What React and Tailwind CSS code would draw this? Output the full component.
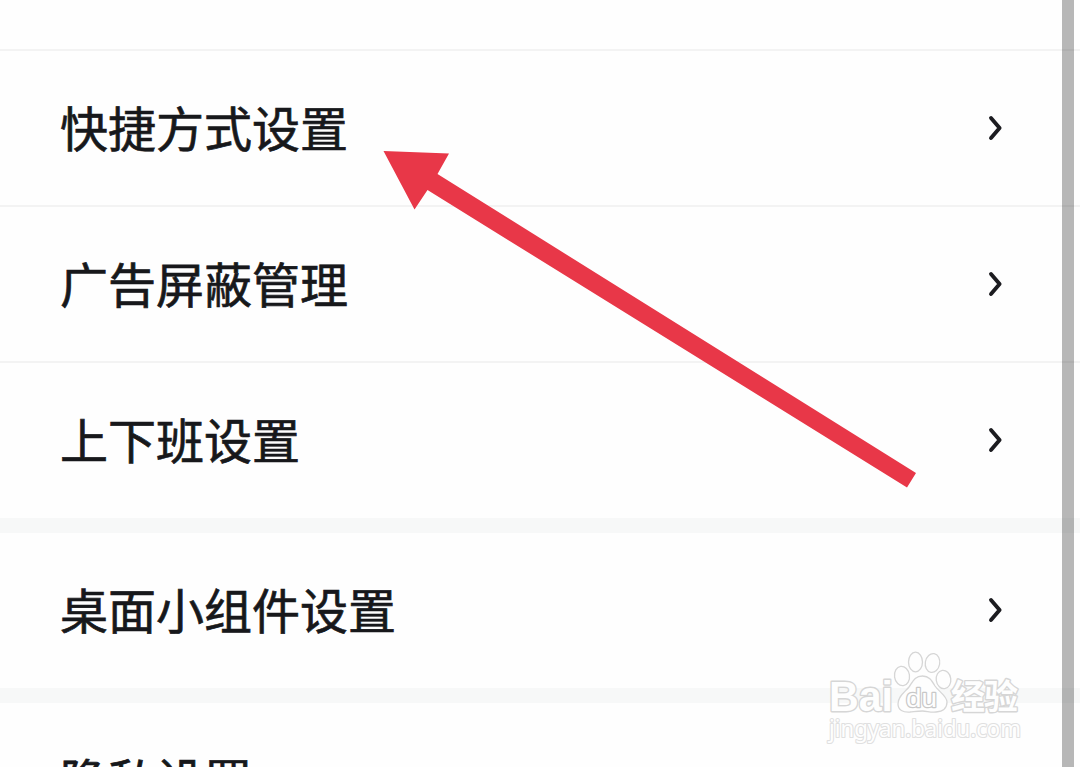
const GROUPS = [
  ['快捷方式设置', '广告屏蔽管理', '上下班设置'],
  ['桌面小组件设置'],
  ['隐私设置'],
]

function Chevron() {
  return (
    <svg width="16" height="28" viewBox="0 0 16 28" fill="none" className="shrink-0">
      <path d="M4 4 L12.600 14 L4 24" stroke="#1c1c20" strokeWidth="3.9" strokeLinecap="round" strokeLinejoin="round" />
    </svg>
  )
}

function SettingRow({ label, last }) {
  return (
    <div className={`flex shrink-0 items-center justify-between pr-[77px] pl-[60px] ${last ? 'h-[155px] pb-[1px]' : 'h-[156px] border-b-2 border-[#f3f3f3]'}`}>
      <span className="pb-[4px] text-[48px] leading-none text-[#17181b] [-webkit-text-stroke:0.7px_#17181b]">{label}</span>
      <Chevron />
    </div>
  )
}

function Watermark() {
  return (
    <svg width="204" height="100" viewBox="0 0 204 100" className="absolute top-[647px] left-[823px]">
      <g fill="#fefefe" stroke="#d6d6d6" strokeWidth="1.3" strokeLinejoin="round">
        <text x="6" y="64" fontSize="42" fontFamily="Liberation Sans, sans-serif" fontWeight="bold" paintOrder="stroke" strokeWidth="2.8" textLength="64" lengthAdjust="spacingAndGlyphs">Bai</text>
        <text x="128" y="62" fontSize="34" fontFamily="Noto Sans CJK SC, sans-serif" fontWeight="bold" paintOrder="stroke" strokeWidth="2.8" textLength="67">经验</text>
        <ellipse cx="79" cy="29" rx="7.5" ry="9.7" transform="rotate(-8 79 29)" />
        <ellipse cx="92.5" cy="15" rx="7" ry="9.8" />
        <ellipse cx="109.5" cy="16" rx="7.2" ry="9.5" transform="rotate(10 109.5 16)" />
        <ellipse cx="120.5" cy="32.5" rx="7.3" ry="9.2" transform="rotate(-8 120.5 32.5)" />
        <path d="M99.500 29 C92 29 90 34 86 40 C82 45 75 49 75 57 C75 63 80 65.500 87 65 C92 64.500 95 64 99.500 64 C104 64 107 65.500 113 65 C120 64.500 124 62 124 55 C124 49 116 45 112 39 C108.500 33 106 29 99.500 29 Z" />
        <text x="83" y="60" fontSize="26" fontFamily="Liberation Sans, sans-serif" stroke="#c8c8c8" paintOrder="stroke" strokeWidth="2.4" textLength="31" lengthAdjust="spacingAndGlyphs">du</text>
        <text x="6" y="90" fontSize="23" fontFamily="Noto Sans, sans-serif" stroke="#e0e0e0" paintOrder="stroke" strokeWidth="2.2" textLength="192" lengthAdjust="spacingAndGlyphs">jingyan.baidu.com</text>
      </g>
    </svg>
  )
}

function Arrow() {
  return (
    <svg width="540" height="345" viewBox="380 146 540 345" className="absolute top-[146px] left-[380px]">
      <path d="M383.500 151 L449 153.500 L437.500 174 L916 473 L907 487.500 L427.500 190 L414.500 209.500 Z" fill="#e83748" />
    </svg>
  )
}

export default function App() {
  return (
    <div className="relative flex h-[767px] w-[1080px] flex-col overflow-hidden bg-[#fefefe] font-['Noto_Sans_CJK_SC',sans-serif]">
      <div className="h-[51px] shrink-0 border-b-2 border-[#f3f3f3]" />
      {GROUPS.map((rows, i) => (
        <div key={i} className={i < GROUPS.length - 1 ? 'shrink-0 border-b-[15px] border-[#f7f8f8]' : 'shrink-0'}>
          {rows.map((label, j) => (
            <SettingRow key={label} label={label} last={j === rows.length - 1} />
          ))}
        </div>
      ))}
      <Watermark />
      <Arrow />
      <div className="absolute top-0 left-[1062px] h-full w-[12px] bg-black/28" />
    </div>
  )
}
